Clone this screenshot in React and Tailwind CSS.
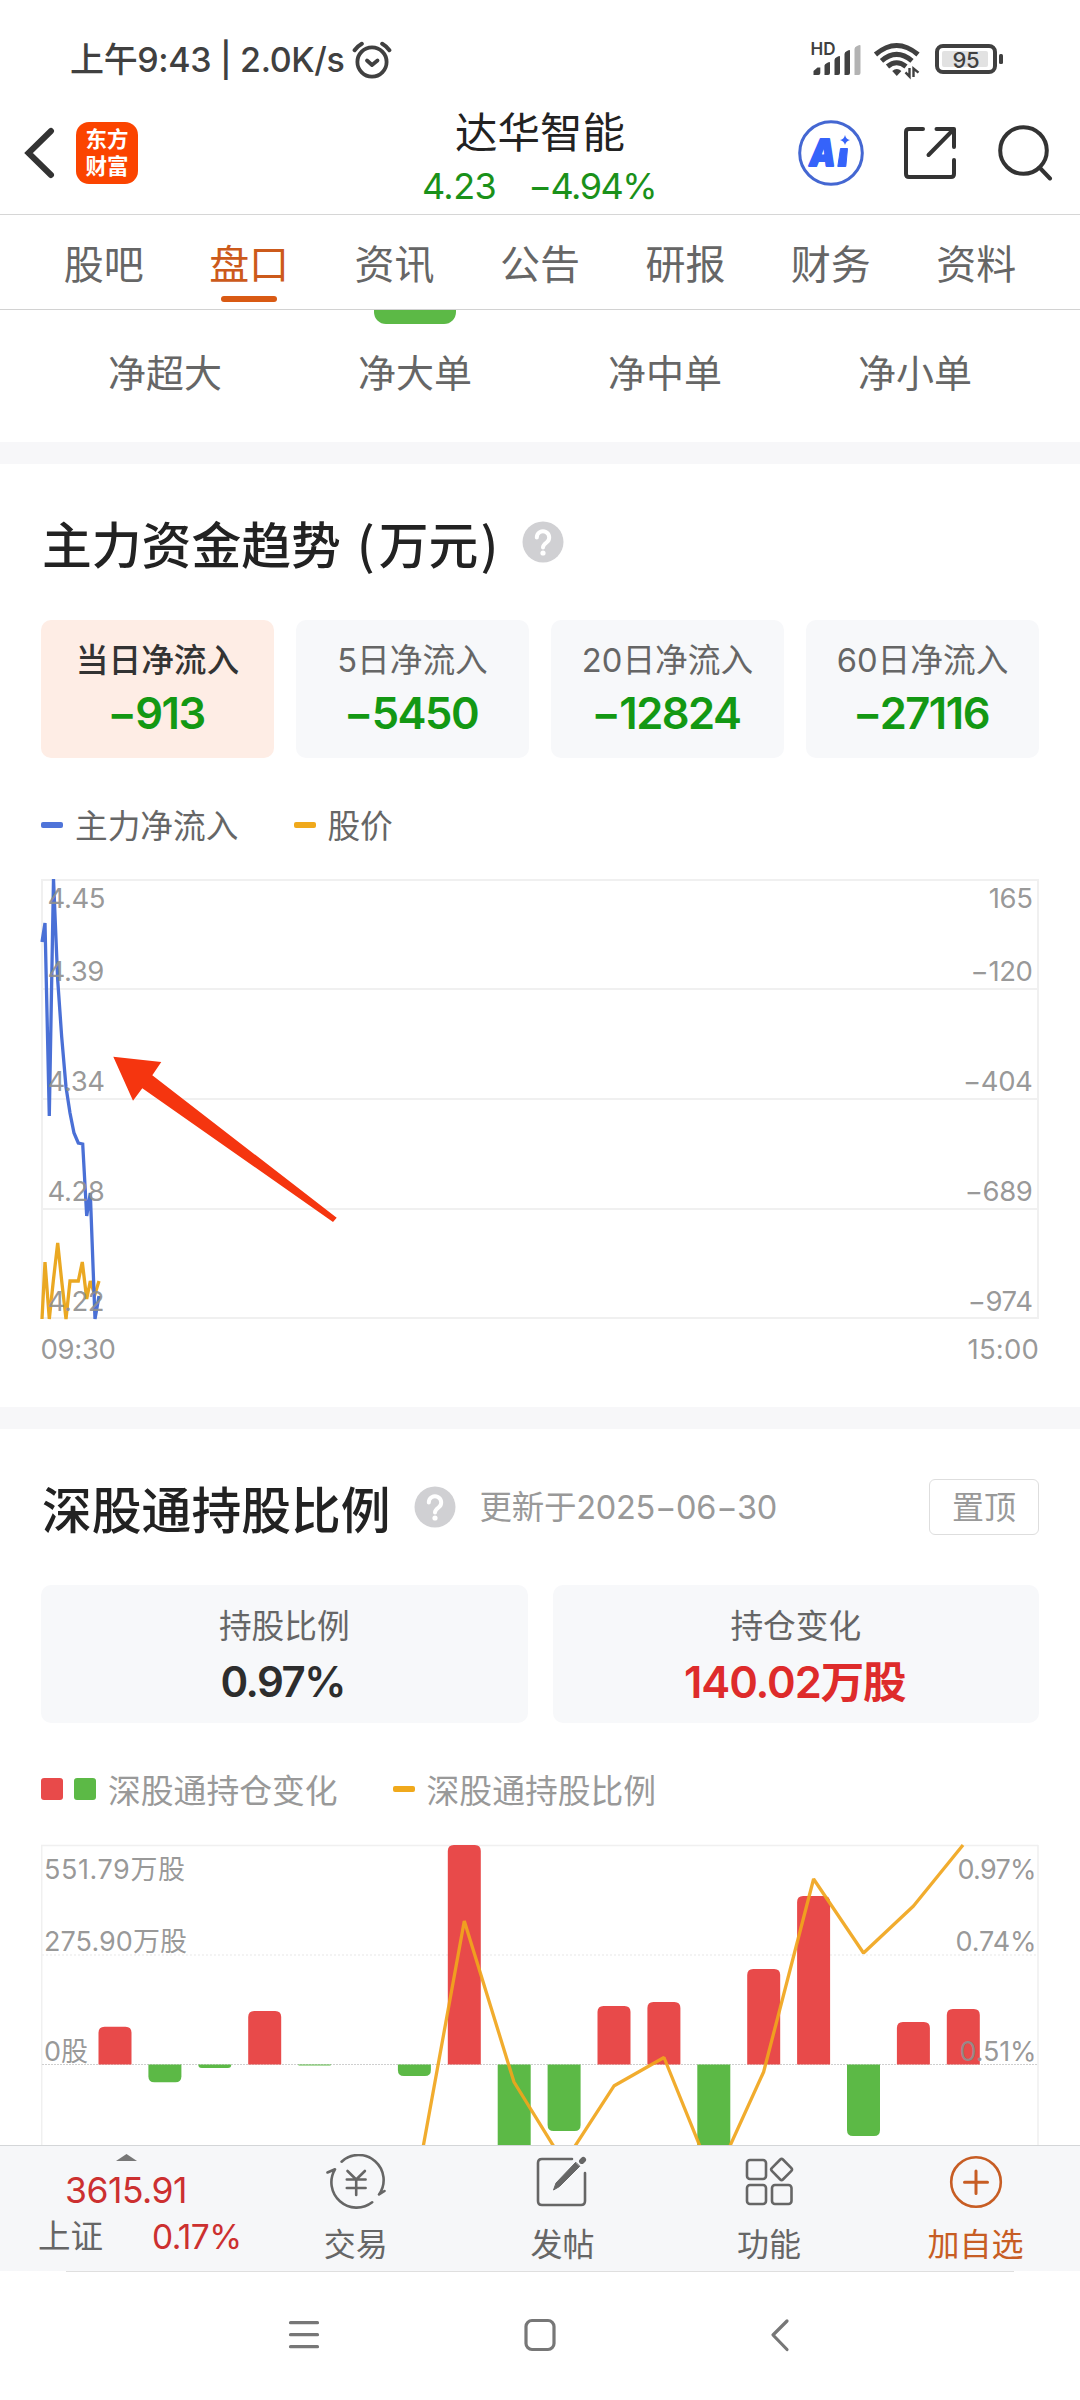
import React from 'react';

const TABS = ['股吧', '盘口', '资讯', '公告', '研报', '财务', '资料'];

const ORDER_TYPES = ['净超大', '净大单', '净中单', '净小单'];

const FLOWS = [
  { label: '当日净流入', value: '−913', active: true },
  { label: '5日净流入', value: '−5450' },
  { label: '20日净流入', value: '−12824' },
  { label: '60日净流入', value: '−27116' },
];

const FLOW_LINE =
  '42,942 45,923 49.3,1116 53.5,879 57.7,980 61.7,1037 66,1087 70,1113 74,1133 78.3,1143 82.7,1144 86.7,1216 90.3,1193 95,1319 99,1296';
const PRICE_LINE =
  '42,1319 45,1262 49.3,1319 53.3,1281 57.7,1243 61.7,1281 66,1319 70,1281 78.3,1281 82.3,1262 86.7,1299 90.3,1281 94.7,1295 99,1281';

const FLOW_AXIS = [
  { y: 908, left: '4.45', right: '165' },
  { y: 981, left: '4.39', right: '−120' },
  { y: 1091, left: '4.34', right: '−404' },
  { y: 1201, left: '4.28', right: '−689' },
  { y: 1311, left: '4.22', right: '−974' },
];

// y of the free end of each bar, zero line is at 2064.5
const ZERO = 2064.5;
const BARS = [2026.7, 2082.3, 2068, 2011, 2065.6, null, 2076, 1845, 2190, 2131, 2006, 2002, 2190, 1969, 1896, 2136, 2022, 2009];
const RATIO_LINE =
  '414,2197 464.3,1921 514,2082 564,2163 614.2,2085.7 664,2057.5 714,2181 763.6,2072 813.6,1879 863.5,1953 913.5,1906 963,1845';

const Help = ({ className }) => (
  <svg viewBox="0 0 42 42" className={`w-[42px] h-[42px] ${className}`}>
    <circle cx="21" cy="21" r="20.5" fill="#d0d0d3" />
    <path d="M14.8 16.5a6.2 6.2 0 1 1 9.6 5.1c-2.2 1.5-3.4 2.5-3.4 5" fill="none" stroke="#fff" strokeWidth="4" strokeLinecap="round" />
    <circle cx="21" cy="32" r="2.6" fill="#fff" />
  </svg>
);

const StatusBar = () => (
  <div className="h-[92px] pt-[27px] pl-[70px] pr-[76px] flex items-center justify-between text-[#404040]">
    <div className="flex items-center">
      <span className="text-[34px] font-medium leading-none whitespace-pre tracking-[-0.35px]">上午9:43 | 2.0K/s</span>
      <svg viewBox="0 0 40 38" className="w-[40px] h-[38px] ml-[7px]" fill="none" stroke="#404040" strokeLinecap="round">
        <circle cx="20" cy="21" r="14.6" strokeWidth="3.8" />
        <path d="M15 19.5l5 4.5 5.5-4.5" strokeWidth="3.8" strokeLinejoin="round" />
        <path d="M2.6 9.2q3-4 7.2-6.4M37.4 9.2q-3-4-7.2-6.4" strokeWidth="4" />
      </svg>
    </div>
    <svg viewBox="810 40 194 40" className="w-[194px] h-[40px]">
      <text x="810.5" y="55" fontSize="17" fontWeight="600" fill="#404040" textLength="25" lengthAdjust="spacingAndGlyphs">HD</text>
      <g fill="#404040">
        <path d="M813.5 75v-4l4-3.5h2.8v5.5q0 2-2 2z" />
        <path d="M824.5 75v-9.5q0-1.5 2.5-2.5 3-1.5 3-.5v10.5q0 2-2 2z" />
        <path d="M834.5 75v-15q0-2 2.5-3 3-1.5 3-.5v16.5q0 2-2 2z" />
        <path d="M844.5 75v-21q0-2 2.5-3 3-1.5 3-.5v22.5q0 2-2 2z" />
      </g>
      <path d="M854.5 75v-26q0-2 2.5-3 3.5-1.5 3.5-.5v27.5q0 2-2 2z" fill="#b3b3b3" />
      <g fill="none" stroke="#404040" strokeWidth="5">
        <path d="M875.5 54.5q21-18 42.5 0" />
        <path d="M881.5 60.8q15-13 30.5 0" />
        <path d="M887.5 66.5q9-7.5 18.5 0" />
      </g>
      <path d="M892.2 71q4.6-4 9.2 0l-4.6 5z" fill="#404040" />
      <path d="M909.5 68v8.5l-4-4.2M913.5 77v-8.5l5 4.2" fill="none" stroke="#404040" strokeWidth="2.4" />
      <rect x="937" y="46" width="58" height="26" rx="6" fill="none" stroke="#404040" strokeWidth="4" />
      <rect x="942" y="51" width="46" height="16" rx="2" fill="#e2e2e2" />
      <rect x="999" y="54" width="4" height="10" rx="1.5" fill="#404040" />
      <text x="966" y="67.5" fontSize="22" fontWeight="500" fill="#404040" textAnchor="middle" textLength="27">95</text>
    </svg>
  </div>
);

const Header = () => (
  <header className="h-[123px] border-b border-[#d6d6d6] grid grid-cols-[1fr_auto_1fr]">
    <div className="flex items-center pl-[24px]">
      <svg viewBox="0 0 32 52" className="w-[32px] h-[52px]" fill="none" stroke="#333" strokeWidth="6" strokeLinecap="round">
        <path d="M27 4L4.5 26 27 48" />
      </svg>
      <div className="ml-[20px] w-[62px] h-[62px] rounded-[13px] bg-[#fb4400] text-white text-[21.5px] font-bold leading-[27px] flex flex-col items-center justify-center">
        <span>东方</span>
        <span>财富</span>
      </div>
    </div>
    <div className="pt-[14px] flex flex-col items-center">
      <h1 className="h-[53px] leading-[53px] text-[42.5px] text-[#222]">达华智能</h1>
      <div className="h-[55px] leading-[55px] text-[36px] text-[#1a911a] flex gap-[32px] ml-[-2px]">
        <span className="tracking-[-0.6px]">4.23</span>
        <span className="tracking-[-1.5px]">−4.94%</span>
      </div>
    </div>
    <div className="flex items-center justify-end pr-[27px]">
      <svg viewBox="0 0 66 66" className="w-[66px] h-[66px]">
        <circle cx="33" cy="33" r="31.3" fill="none" stroke="#4467d2" strokeWidth="3" />
        <text x="11.5" y="45.5" fontSize="37.5" fontWeight="900" fontStyle="italic" fill="#3563fa" stroke="#3563fa" strokeWidth="1.8" strokeLinejoin="round" textLength="26" lengthAdjust="spacingAndGlyphs">A</text>
        <path d="M42.5 28.5h7l-1.7 18h-8z" fill="#3563fa" stroke="#3563fa" strokeLinejoin="round" />
        <path d="M47 15q1 4.3 5 5-4 1-5 5-1-4-5-5 4-.7 5-5z" fill="#3563fa" />
      </svg>
      <svg viewBox="0 0 54 54" className="w-[54px] h-[54px] ml-[39px]" fill="none" stroke="#333" strokeWidth="4" strokeLinecap="round" strokeLinejoin="round">
        <path d="M20 3H6q-3 0-3 3v42q0 3 3 3h42q3 0 3-3V34" />
        <path d="M33.5 3H51v18M50 4L25.5 29" />
      </svg>
      <svg viewBox="0 0 56 56" className="w-[56px] h-[56px] ml-[40px]" fill="none" stroke="#333" strokeWidth="4" strokeLinecap="round">
        <circle cx="26.5" cy="25.5" r="23.3" />
        <path d="M42.5 42.5L53 53.5" />
      </svg>
    </div>
  </header>
);

const Tabs = () => (
  <nav className="h-[95px] border-b border-[#d2d2d2] px-[31px] grid grid-cols-7">
    {TABS.map((tab) => (
      <div key={tab} className={`relative h-[94px] text-center text-[40px] leading-[99px] ${tab === '盘口' ? 'text-[#cc5a1b]' : 'text-[#666]'}`}>
        {tab}
        {tab === '盘口' && <i className="absolute left-1/2 -translate-x-1/2 bottom-[7px] w-[56px] h-[6px] rounded-full bg-[#d95a14]" />}
      </div>
    ))}
  </nav>
);

const FlowChart = () => (
  <svg viewBox="41 870 998 500" className="w-[998px] h-[500px] mt-[25px] overflow-visible">
    <g stroke="#f0f0f0" strokeWidth="2" fill="none">
      <rect x="42" y="880" width="996" height="438" />
      <path d="M42 989H1038M42 1099H1038M42 1209H1038" />
    </g>
    <polyline points={PRICE_LINE} fill="none" stroke="#eaa822" strokeWidth="3.3" />
    <polyline points={FLOW_LINE} fill="none" stroke="#4a70d6" strokeWidth="3.3" />
    <g fontSize="27.5" fill="#8f8f8f" fillOpacity="0.92" letterSpacing="-0.4">
      {FLOW_AXIS.map((row) => (
        <React.Fragment key={row.y}>
          <text x="47.5" y={row.y}>{row.left}</text>
          <text x="1032.5" y={row.y} textAnchor="end">{row.right}</text>
        </React.Fragment>
      ))}
      <text x="40.5" y="1359" textLength="75">09:30</text>
      <text x="1038.5" y="1359" textAnchor="end" textLength="71">15:00</text>
    </g>
    <path d="M113.3 1056.7L161.3 1062L152.3 1075.3L336.7 1217.7L333 1222L142.3 1088.3L133 1100.7Z" fill="#f5350f" />
  </svg>
);

const barPath = (x, end) => {
  const h = Math.abs(ZERO - end);
  const r = Math.min(6, h);
  const s = end < ZERO ? 1 : -1;
  return `M${x} ${ZERO}V${end + s * r}Q${x} ${end} ${x + r} ${end}H${x + 33 - r}Q${x + 33} ${end} ${x + 33} ${end + s * r}V${ZERO}Z`;
};

const HoldingChart = () => (
  <svg viewBox="41 1835 998 310" className="w-[998px] h-[310px] mt-[25px]">
    <g stroke="#f0f0f0" strokeWidth="1.5" fill="none">
      <path d="M41.7 2150V1845.5H1038M1038 1845V2150" />
      <path d="M42 1955H1038" strokeDasharray="2 2" />
    </g>
    <path d={`M42 ${ZERO}H1038`} stroke="#cfcfcf" strokeWidth="1.2" strokeDasharray="2 1" />
    {BARS.map((end, i) => end && (
      <path key={i} d={barPath(98.5 + i * 49.9, end)} fill={end < ZERO ? '#e84a4a' : '#5cb946'} />
    ))}
    <polyline points={RATIO_LINE} fill="none" stroke="#f0a51c" strokeOpacity="0.92" strokeWidth="3.3" strokeLinejoin="bevel" />
    <g fontSize="27" fill="#8f8f8f" fillOpacity="0.92">
      <text x="44" y="1879" textLength="141" lengthAdjust="spacing">551.79万股</text>
      <text x="44" y="1951" textLength="143" lengthAdjust="spacing">275.90万股</text>
      <text x="44" y="2061" textLength="44" lengthAdjust="spacing">0股</text>
      <text x="1036.5" y="1879" textAnchor="end" textLength="79">0.97%</text>
      <text x="1036.5" y="1951" textAnchor="end" textLength="81">0.74%</text>
      <text x="1036.5" y="2061" textAnchor="end" textLength="77">0.51%</text>
    </g>
  </svg>
);

const ToolItem = ({ label, className = 'text-[#666]', children }) => (
  <div className={`w-[206.6px] flex flex-col items-center pt-[8px] ${className}`}>
    <svg viewBox="0 0 60 56" className="w-[60px] h-[56px]" fill="none" stroke="currentColor" strokeWidth="2.6" strokeLinecap="round" strokeLinejoin="round">
      {children}
    </svg>
    <span className="mt-[14px] text-[32px] leading-[41px]">{label}</span>
  </div>
);

const Toolbar = () => (
  <footer className="h-[126px] border-t border-[#d4d6d8] bg-[#f6f7f9] flex">
    <div className="w-[252.5px] flex flex-col">
      <svg viewBox="0 0 21 7" className="w-[21px] h-[7px] ml-[116px] mt-[8px]"><path d="M0 7L10.5 0 21 7z" fill="#777" /></svg>
      <div className="ml-[65px] mt-[9px] h-[42px] leading-[42px] text-[35.5px] tracking-[-0.5px] text-[#cc3030]">3615.91</div>
      <div className="ml-[38px] mr-[11px] mt-[4px] flex items-center justify-between leading-[42px]">
        <span className="text-[32.5px] text-[#666]">上证</span>
        <span className="text-[33.5px] tracking-[-0.6px] text-[#cc3030]">0.17%</span>
      </div>
    </div>
    <ToolItem label="交易">
      <path d="M15.6 7.7A25 25 0 0 1 53 40.5l5.5-3.5" />
      <path d="M46.2 48.3A25.3 25.3 0 0 1 9 15.3l-7.5 3.2" />
      <path d="M21.5 17l8.7 8.5 8.7-8.5M30.2 25.5v15.5M20.8 25.5h18.8M20.8 34h18.8" />
    </ToolItem>
    <ToolItem label="发帖">
      <path d="M40 5H10q-4 0-4 4v38q0 4 4 4h39q4 0 4-4V19" />
      <path d="M47.5 12.5L27.5 32.5l-6 3.5 2.5-7L43.5 8.5z" fill="currentColor" strokeWidth="1" />
      <path d="M49.8 7.2l1.5-1.5" strokeWidth="5.5" />
    </ToolItem>
    <ToolItem label="功能">
      <rect x="8" y="6" width="19" height="19" rx="3" />
      <rect x="8" y="31" width="19" height="19" rx="3" />
      <rect x="33" y="31" width="19.5" height="19" rx="3" />
      <path d="M41.3 5.5q1.3-1.3 2.6 0l8.5 8.7q1.3 1.3 0 2.6l-8.5 8.7q-1.3 1.3-2.6 0l-8.5-8.7q-1.3-1.3 0-2.6z" />
    </ToolItem>
    <ToolItem label="加自选" className="text-[#c75d24]">
      <circle cx="30" cy="28" r="24.8" />
      <path d="M18.5 28.2h23M30 17v22.5" strokeWidth="3" />
    </ToolItem>
  </footer>
);

const Dash = ({ className }) => <i className={`w-[22px] h-[6px] rounded-[2px] ${className}`} />;

export default function App() {
  return (
    <div className="w-[1080px] h-[2400px] overflow-hidden bg-white font-['Inter','Noto_Sans_CJK_SC',sans-serif]">
      <StatusBar />
      <Header />
      <Tabs />

      <section className="h-[132px] px-[40px] grid grid-cols-4">
        {ORDER_TYPES.map((name) => (
          <div key={name} className="flex flex-col items-center">
            <div className={`w-[82px] h-[14px] rounded-b-[12px] ${name === '净大单' ? 'bg-[#5cb946]' : ''}`} />
            <span className="mt-[24px] leading-[50px] text-[38px] text-[#666]">{name}</span>
          </div>
        ))}
      </section>

      <div className="h-[22px] bg-[#f7f7f9]" />

      <section className="h-[943px] pt-[48px] px-[41px]">
        <div className="flex items-center h-[60px]">
          <h2 className="ml-[1px] text-[49.8px] font-medium text-[#222] leading-[60px] flex font-['Noto_Sans_CJK_SC','Inter',sans-serif]">
            主力资金趋势
            <span className="w-[34px] mr-[4px] text-right">(</span>
            万元
            <span className="w-[20px] pl-[2px]">)</span>
          </h2>
          <Help className="ml-[24px]" />
        </div>

        <div className="mt-[48px] grid grid-cols-4 gap-[22px]">
          {FLOWS.map((item) => (
            <div key={item.label} className={`h-[138px] rounded-[10px] pt-[20px] text-center ${item.active ? 'bg-[#feede5]' : 'bg-[#f7f8fa]'}`}>
              <div className={`h-[40px] leading-[40px] text-[32.7px] ${item.active ? 'font-medium text-[#333]' : 'text-[#666]'}`}>{item.label}</div>
              <div className="mt-[8px] mr-[3px] h-[50px] leading-[50px] text-[43.5px] font-semibold tracking-[-1.5px] text-[#139813]">{item.value}</div>
            </div>
          ))}
        </div>

        <div className="mt-[47px] h-[40px] flex items-center text-[32.7px] leading-[40px] text-[#666]">
          <Dash className="bg-[#4f74d9]" />
          <span className="ml-[12px] pt-[1px]">主力净流入</span>
          <Dash className="ml-[56px] bg-[#f0a91c]" />
          <span className="ml-[11px] pt-[1px]">股价</span>
        </div>

        <FlowChart />
      </section>

      <div className="h-[22px] bg-[#f7f7f9]" />

      <section className="h-[716px] pt-[48px] px-[41px] overflow-hidden">
        <div className="flex items-center h-[60px]">
          <h2 className="ml-[1px] text-[49.8px] font-medium text-[#222] leading-[60px] font-['Noto_Sans_CJK_SC','Inter',sans-serif]">深股通持股比例</h2>
          <Help className="ml-[23px]" />
          <span className="ml-[24px] pt-[2px] text-[32.5px] text-[#999] tracking-[-0.3px]">更新于2025−06−30</span>
          <button className="ml-auto w-[110px] h-[56px] pt-[2px] rounded-[6px] border-[1.5px] border-[#dedede] text-[32px] text-[#999] leading-none">置顶</button>
        </div>

        <div className="mt-[48px] grid grid-cols-2 gap-[25px] text-center">
          <div className="h-[138px] rounded-[10px] bg-[#f7f8fa] pt-[21px]">
            <div className="h-[40px] leading-[40px] text-[32.7px] text-[#666]">持股比例</div>
            <div className="mt-[11px] mr-[3px] h-[50px] leading-[50px] text-[42px] font-semibold tracking-[-1.5px] text-[#2d2d2d]">0.97%</div>
          </div>
          <div className="h-[138px] rounded-[10px] bg-[#f7f8fa] pt-[21px]">
            <div className="h-[40px] leading-[40px] text-[32.7px] text-[#666]">持仓变化</div>
            <div className="mt-[11px] mr-[2px] h-[50px] leading-[50px] text-[43.5px] font-semibold tracking-[-1.1px] text-[#de2b2b]">140.02万股</div>
          </div>
        </div>

        <div className="mt-[46px] h-[40px] flex items-center text-[32.8px] leading-[40px] text-[#999]">
          <i className="w-[22px] h-[22px] rounded-[3px] bg-[#e84a4a]" />
          <i className="ml-[11px] w-[22px] h-[22px] rounded-[3px] bg-[#5cb946]" />
          <span className="ml-[12px] pt-[3px]">深股通持仓变化</span>
          <Dash className="ml-[55px] bg-[#f0a91c]" />
          <span className="ml-[12px] pt-[3px]">深股通持股比例</span>
        </div>

        {/* one extra pixel keeps the chart's top edge on its own viewBox origin */}
        <div className="pt-[1px]">
          <HoldingChart />
        </div>
      </section>

      <Toolbar />

      <div className="h-[129px] flex justify-center">
        <div className="w-[948px] border-t-[1.5px] border-[#dfdfdf] pt-[45px]">
          <svg viewBox="66 2317 948 36" className="w-[948px] h-[36px]" fill="none" stroke="#777" strokeWidth="3.2" strokeLinecap="round" strokeLinejoin="round">
            <path d="M290.5 2322.7h27M290.5 2334.7h27M290.5 2346.7h27" />
            <rect x="526" y="2320.5" width="28" height="29" rx="6" />
            <path d="M787 2321l-14 14 14 14.5" />
          </svg>
        </div>
      </div>
    </div>
  );
}
